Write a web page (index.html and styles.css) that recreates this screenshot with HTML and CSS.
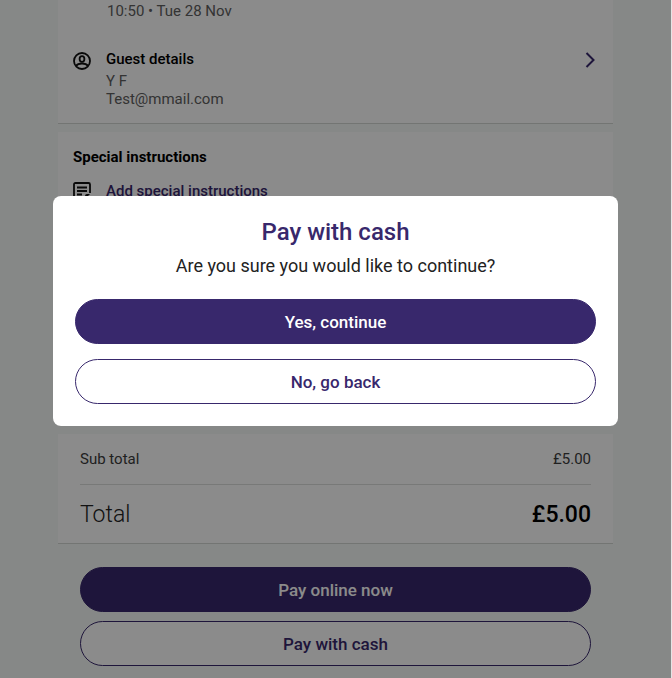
FILE: index.html
```html
<!DOCTYPE html>
<html lang="en">
<head>
<meta charset="utf-8">
<meta name="viewport" content="width=device-width, initial-scale=1">
<title>Checkout</title>
<link rel="stylesheet" href="styles.css">
</head>
<body>
<main class="page">
  <section class="card details">
    <p class="slot">10:50 • Tue 28 Nov</p>
    <div class="guest">
      <svg class="icon" viewBox="0 0 18 18" fill="none" stroke="currentColor" stroke-width="1.800" aria-hidden="true">
        <circle cx="9" cy="9" r="8"/>
        <ellipse cx="9" cy="7" rx="2.4" ry="2.8"/>
        <path d="M3 14c1.400-2 3.500-2.500 6-2.500s4.600.5 6 2.500"/>
      </svg>
      <div class="guest-text">
        <h2 class="label">Guest details</h2>
        <p class="muted">Y F</p>
        <p class="muted">Test@mmail.com</p>
      </div>
      <button class="chevron" type="button" aria-label="Edit guest details">
        <svg viewBox="0 0 10 16" fill="none" stroke="currentColor" stroke-width="2" aria-hidden="true"><path d="M1.500 1l7 7-7 7"/></svg>
      </button>
    </div>
  </section>
  <section class="card instructions">
    <h2 class="heading">Special instructions</h2>
    <a class="add" href="#">
      <svg class="icon" viewBox="0 0 18 18" fill="none" stroke="currentColor" stroke-width="1.800" aria-hidden="true">
        <path d="M11 17H2.500Q1 17 1 15.500V2.500Q1 1 2.500 1h13Q17 1 17 2.500V11"/>
        <path d="M4 5.500h10M4 9h10M4 12.500h5"/>
        <path d="M12 17v-3q0-2 2-2h3z" fill="currentColor" stroke="none"/>
      </svg>
      <span>Add special instructions</span>
    </a>
  </section>
  <section class="card totals">
    <div class="row subtotal"><span>Sub total</span><span>£5.00</span></div>
    <div class="row total"><span class="total-name">Total</span><span class="total-value">£5.00</span></div>
  </section>
  <div class="actions">
    <button class="button primary" type="button">Pay online now</button>
    <button class="button outline" type="button">Pay with cash</button>
  </div>
</main>
<div class="overlay">
  <div class="dialog" role="dialog" aria-modal="true" aria-labelledby="dialog-title">
    <h1 class="title" id="dialog-title">Pay with cash</h1>
    <p class="message">Are you sure you would like to continue?</p>
    <div class="choices">
      <button class="button primary" type="button">Yes, continue</button>
      <button class="button outline" type="button">No, go back</button>
    </div>
  </div>
</div>
</body>
</html>
```
FILE: styles.css
```css
* {
  box-sizing: border-box;
}

:root {
  --purple: #38286c;
  --line: #dcdedc;
}

body {
  margin: 0;
  background: #f6f9f7;
  border-right: 1px solid #e4e4e4;
  font-family: Roboto, "Liberation Sans", sans-serif;
  font-size: 15px;
  line-height: 18px;
  color: #3c3c3c;
  overflow: hidden;
}

h1, h2, p {
  margin: 0;
}

button {
  font: inherit;
  cursor: pointer;
}

.page {
  padding: 0 58px 12px;
}

.card {
  background: #fff;
  border-bottom: 1px solid #d4d6d4;
  margin-bottom: 8px;
}

.details {
  padding: 2px 15px 15px;
}

.slot {
  padding-left: 34px;
  color: #606060;
}

.guest {
  display: flex;
  align-items: flex-start;
  margin-top: 28px;
}

.icon {
  flex: none;
  width: 18px;
  height: 18px;
  color: #111;
}

.guest .icon {
  margin-top: 4px;
}

.guest-text {
  flex: 1;
  margin-left: 15px;
}

.label {
  margin-bottom: 2px;
  font-size: 15px;
  line-height: 22px;
  font-weight: 500;
  color: #000;
}

.muted {
  color: #606060;
}

.chevron {
  border: 0;
  padding: 0;
  background: none;
  color: var(--purple);
  margin: 4px 3px 0 0;
}

.chevron svg {
  display: block;
  width: 10px;
  height: 16px;
}

.instructions {
  min-height: 294px;
  padding: 15px;
}

.heading {
  font-size: 15px;
  line-height: 20px;
  font-weight: 700;
  color: #000;
}

.add {
  display: flex;
  align-items: center;
  gap: 15px;
  margin-top: 15px;
  color: var(--purple);
  font-weight: 500;
  text-decoration: none;
}

.totals {
  padding: 0 22px;
}

.row {
  display: flex;
  align-items: center;
  justify-content: space-between;
}

.subtotal {
  height: 51px;
  border-bottom: 1px solid var(--line);
}

.total {
  height: 58px;
  padding-top: 2px;
  font-size: 23px;
}

.total-name {
  font-weight: 300;
  color: #222;
}

.total-value {
  font-weight: 500;
  color: #000;
}

.actions {
  display: grid;
  gap: 9px;
  padding: 15px 22px 0;
}

.button {
  width: 100%;
  height: 45px;
  border: 1px solid var(--purple);
  border-radius: 23px;
  font-size: 17px;
  font-weight: 500;
}

.primary {
  background: var(--purple);
  color: #fff;
}

.outline {
  background: #fff;
  color: var(--purple);
}

.overlay {
  position: fixed;
  inset: 0 1px 0 0;
  padding: 196px 53px 0;
  background: rgba(0, 0, 0, 0.455);
}

.dialog {
  padding: 22px;
  border-radius: 8px;
  background: #fff;
  text-align: center;
}

.title {
  font-size: 24px;
  line-height: 28px;
  font-weight: 500;
  color: var(--purple);
}

.message {
  margin-top: 9px;
  font-size: 18px;
  line-height: 22px;
  color: #222;
}

.choices {
  display: grid;
  gap: 15px;
  margin-top: 22px;
}
```
